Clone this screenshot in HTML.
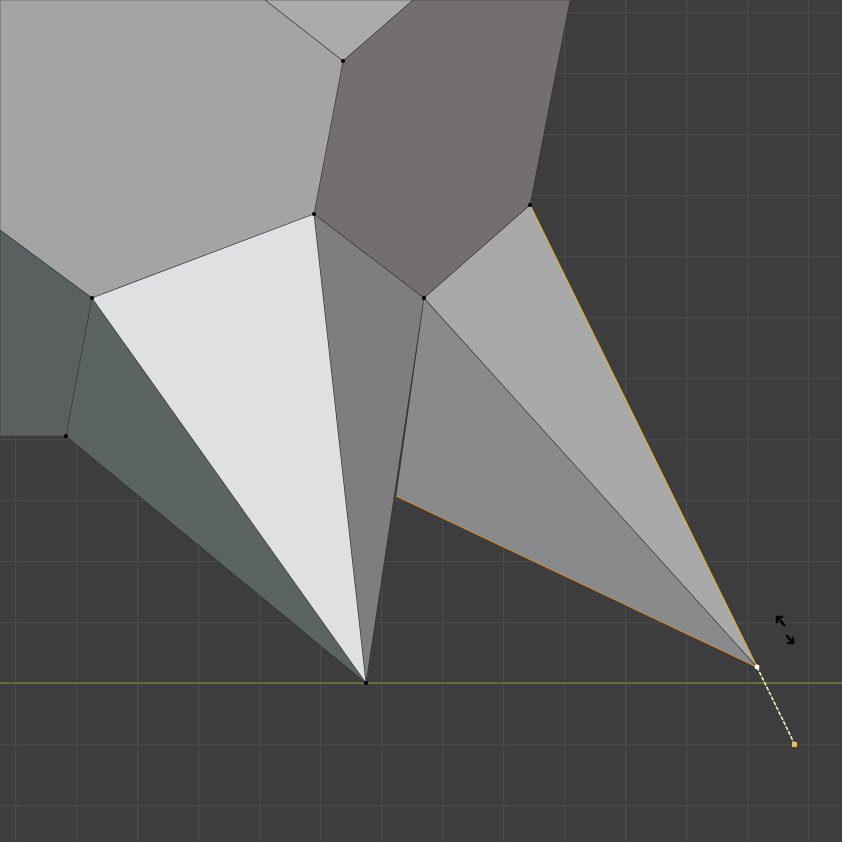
<!DOCTYPE html>
<html><head><style>html,body{margin:0;padding:0;background:#3d3d3d;overflow:hidden}</style></head>
<body>
<svg width="842" height="842" viewBox="0 0 842 842" xmlns="http://www.w3.org/2000/svg" style="display:block">
<defs>
<pattern id="g" x="15" y="12" width="61" height="61" patternUnits="userSpaceOnUse">
<rect width="61" height="61" fill="#3d3d3d"/>
<rect width="1.2" height="61" fill="#494949"/>
<rect width="61" height="1.2" fill="#494949"/>
</pattern>
</defs>
<rect width="842" height="842" fill="url(#g)"/>
<line x1="0" y1="683" x2="842" y2="683" stroke="#6b8a2e" stroke-width="1.3"/>
<g stroke="#333" stroke-width="0.6" stroke-linejoin="round">
<polygon points="265,0 413,0 343,61" fill="#acabac"/>
<polygon points="413,0 570,0 530,205 424,298 314,214 343,61" fill="#736f70"/>
<polygon points="0,0 265,0 343,61 314,214 92,298 0,230" fill="#a4a4a4"/>
<polygon points="0,230 92,298 66,436 0,436" fill="#59605f"/>
<polygon points="92,298 66,436 366,683" fill="#5c6462"/>
<polygon points="92,298 314,214 366,683" fill="#dfe0e2"/>
<polygon points="314,214 424,298 366,683" fill="#7f7d7e"/>
<polygon points="424,298 757,667 396,496" fill="#898a8b"/>
<polygon points="424,298 530,205 757,667" fill="#aaa9aa"/>
</g>
<line x1="396" y1="496" x2="757" y2="667" stroke="#c98a3a" stroke-width="1.1"/>
<line x1="530" y1="205" x2="757" y2="667" stroke="#dcae40" stroke-width="1.2"/>
<line x1="757" y1="667" x2="795" y2="745" stroke="#f4eec0" stroke-width="1.6" stroke-dasharray="4,1.5"/>
<rect x="792" y="742" width="5" height="5" fill="#d8c070"/>
<circle cx="757" cy="667" r="2.5" fill="#fff"/>
<g fill="#000">
<circle cx="343" cy="61" r="2"/><circle cx="314" cy="214" r="2"/><circle cx="92" cy="298" r="2"/>
<circle cx="66" cy="436" r="2"/><circle cx="424" cy="298" r="2"/><circle cx="530" cy="205" r="2"/>
<circle cx="366" cy="683" r="2"/>
</g>
<g stroke="#000" stroke-width="2.5" fill="none" stroke-linecap="round">
<path d="M784,625 L777,617 M777,617 L777,622 M777,617 L782,617"/>
<path d="M787,636 L793,643 M793,643 L793,638 M793,643 L788,643"/>
</g>
</svg>
</body></html>
